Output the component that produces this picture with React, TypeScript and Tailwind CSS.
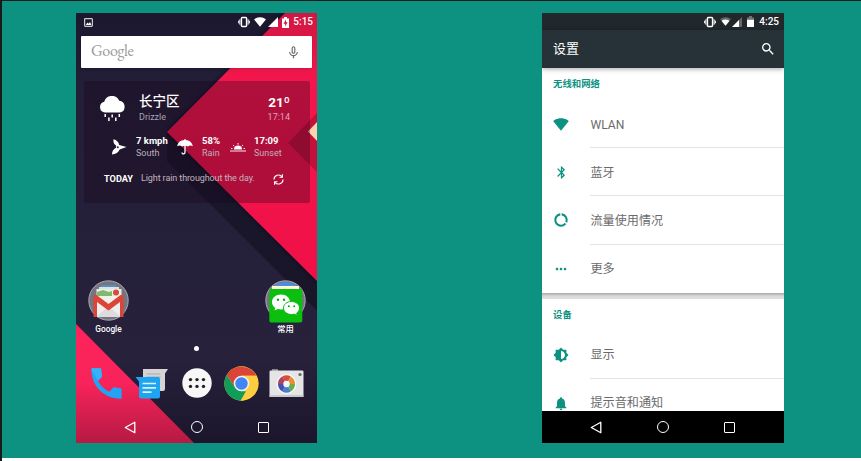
import React from "react";
import {
  MdBluetooth,
  MdBrightness6,
  MdDataUsage,
  MdMicNone,
  MdMoreHoriz,
  MdNotifications,
  MdSearch,
} from "react-icons/md";

const Vibrate = () => (
  <svg className="h-3 w-3" viewBox="0 0 12 12">
    <rect x="3.4" y="1.6" width="5.2" height="8.8" rx="1" fill="none" stroke="#fff" strokeWidth="1.5" />
    <path d="M1.8 3.4v5.2M10.2 3.4v5.2" stroke="#fff" strokeWidth="1" />
    <path d="M.5 4.7v2.6M11.5 4.7v2.6" stroke="#fff" strokeWidth=".9" />
  </svg>
);

const WifiFan = ({ className, dim }: { className: string; dim?: boolean }) => (
  <svg className={className} viewBox="0 0 24 19">
    <path d="M12 19L.2 4.3C.7 3.9 5.1 0 12 0s11.3 3.9 11.8 4.3z" fill="currentColor" opacity={dim ? 0.3 : 1} />
    {dim && <path d="M12 19L3.5 8.4C4.5 7.600 7.500 5.300 12 5.300s7.500 2.300 8.500 3.100z" fill="currentColor" />}
  </svg>
);

const Signal = ({ dim }: { dim?: boolean }) => (
  <svg className="h-[10px] w-[10px]" viewBox="0 0 10 10">
    <path d="M0 10L10 0v10z" fill="#fff" opacity={dim ? 0.3 : 1} />
    {dim && <path d="M0 10L7 3v7z" fill="#fff" />}
  </svg>
);

const Battery = ({ charging }: { charging?: boolean }) => (
  <svg className="h-[11px] w-[7px]" viewBox="0 0 7 11">
    <path d="M0 1.500h2V0h3v1.500h2V11H0z" fill="#fff" opacity={charging ? 1 : 0.35} />
    {charging ? (
      <path d="M4 2.500L1.500 6.700h1.600v2.800l2.500-4.200H4z" fill="#c8183f" />
    ) : (
      <path d="M0 3.800h7V11H0z" fill="#fff" />
    )}
  </svg>
);

const NavBar = ({ className }: { className: string }) => (
  <div className={`flex h-8 shrink-0 items-center ${className}`}>
    <svg className="h-[13px] w-3" viewBox="0 0 12 13">
      <path d="M10.800 1.300v10.400L1.300 6.500z" fill="none" stroke="#fff" strokeWidth="1.300" strokeLinejoin="round" />
    </svg>
    <div className="ml-[55px] h-3 w-3 rounded-full border-[1.5px] border-white" />
    <div className="ml-[55px] h-[11px] w-[11px] rounded-[1px] border-[1.5px] border-white" />
  </div>
);

const Wallpaper = () => (
  <svg className="absolute inset-0 h-full w-full" viewBox="0 0 241 430" preserveAspectRatio="none">
    <defs>
      <linearGradient id="red" x1="0" y1="0" x2="0" y2="1">
        <stop offset="0" stopColor="#d01743" />
        <stop offset=".25" stopColor="#f3164c" />
        <stop offset="1" stopColor="#ef1047" />
      </linearGradient>
      <linearGradient id="corner" x1="0" y1="0" x2="0" y2="1">
        <stop offset="0" stopColor="#ff245b" />
        <stop offset=".5" stopColor="#f7235a" />
        <stop offset="1" stopColor="#b51a43" />
      </linearGradient>
      <linearGradient id="night" x1="0" y1="0" x2="0" y2="1">
        <stop offset="0" stopColor="#1b182e" />
        <stop offset=".18" stopColor="#231f38" />
        <stop offset=".8" stopColor="#27213c" />
        <stop offset="1" stopColor="#1b162c" />
      </linearGradient>
      <filter id="soft" x="-10%" y="-10%" width="120%" height="120%">
        <feGaussianBlur stdDeviation="2.500" />
      </filter>
    </defs>
    <path d="M0 0h241v430H0z" fill="url(#night)" />
    <path d="M91 119v29l150 150v-30z" fill="#19162a" />
    <path d="M208 0L91 119l150 149V0z" fill="#100d20" opacity=".7" filter="url(#soft)" />
    <path d="M209 0L91 119l150 149V0z" fill="url(#red)" />
    <path d="M241 100l-29 30 29 29z" fill="#c40f3b" />
    <path d="M241 109l-9 9.500 9 9.500z" fill="#ffd1ae" />
    <path d="M0 311l118 119H0z" fill="url(#corner)" />
  </svg>
);

const RainCloud = () => (
  <svg className="h-[27px] w-[27px]" viewBox="0 0 27 27">
    <path d="M6 16.500a5.500 5.500 0 01-.8-10.800 8 8 0 0115-1 6 6 0 01.8 11.800z" fill="#fff" />
    <path d="M6.200 18v3M9.900 21.500v3.500M13.200 18.500v3M16.800 21.500v3.500M20.300 18v3" stroke="#fff" strokeWidth="1.500" />
  </svg>
);

const Fan = () => (
  <svg className="h-4 w-4" viewBox="0 0 16 16">
    <path d="M5 6.500C2.800 4.800 2 2.700 2.500.2 5.800 1 7.800 3.200 8.200 6L15.500 8 8.600 10.400C7.500 13.500 4.800 15.200 1 15.500c-.1-3 1.200-5.200 4.200-7z" fill="#fff" />
    <circle cx="6.800" cy="8.300" r="1" fill="#292139" />
  </svg>
);

const Umbrella = () => (
  <svg className="h-4 w-4" viewBox="0 0 16 16">
    <path d="M.2 7.200C.7 3.600 3.700 1.200 7.400 1V0h1.200v1c3.700.2 6.700 2.600 7.200 6.200-1.800-1-3.500-1-4.700.3C9.300 6.600 6.700 6.600 5 7.500 3.700 6.200 2 6.200.2 7.200z" fill="#fff" />
    <path d="M8 6v7.300c0 2.200-3 2.200-3 .2" stroke="#fff" strokeWidth="1.300" fill="none" />
  </svg>
);

const Sunset = () => (
  <svg className="h-[9px] w-4" viewBox="0 0 16 9">
    <path d="M4 6.500a4 4 0 018 0z" fill="#fff" />
    <path d="M0 8h16M8 0v1.700M3 2l1.300 1.200M13 2l-1.300 1.200M1 5.500h1.500M13.500 5.500H15" stroke="#fff" strokeWidth=".9" />
  </svg>
);

const Refresh = () => (
  <svg className="h-[11px] w-[11px]" viewBox="0 0 11 11" fill="none" stroke="#fff" strokeWidth="1.100">
    <path d="M1 5.500A4.500 4.500 0 019 2.700M10 5.500a4.500 4.500 0 01-8 2.800" />
    <path d="M9.400.3v2.900H6.500M1.600 10.700V7.800h2.900" />
  </svg>
);

const GmailFolder = () => (
  <svg className="h-[41px] w-[41px]" viewBox="0 0 41 41">
    <circle cx="20.500" cy="20.500" r="19.700" fill="#777482" stroke="#aaa8b2" strokeWidth="1" />
    <path d="M13 5h15v5H13z" fill="#5c8fbd" />
    <path d="M11 7h20v3H11z" fill="#d5e4e7" />
    <path d="M8.500 9h25v12h-25z" fill="#e9eee0" />
    <path d="M9 12l6-2 6 2 3-1v8H9z" fill="#7fba70" />
    <circle cx="28" cy="12.500" r="3" fill="#d84a40" />
    <path d="M6 17h29v20H6z" fill="#eee" />
    <path d="M8 37l12.500-11L33 37z" fill="#dcdcdc" />
    <path d="M9 16h23L20.500 26z" fill="#f0f2ea" />
    <path d="M5.500 17q0-2.500 3-2L20.500 24l12-9q3-.5 3 2v20H32V22L20.500 30.500 9 22v15H5.500z" fill="#db4437" />
  </svg>
);

const WechatFolder = () => (
  <svg className="h-[43px] w-[41px]" viewBox="0 0 41 43">
    <circle cx="20.500" cy="20.500" r="19.700" fill="#777482" stroke="#aaa8b2" strokeWidth="1" />
    <path d="M10 4.500q10.500-5 21 0v4H10z" fill="#4b8edb" />
    <path d="M7 6h27v3.500H7z" fill="#fffbd2" />
    <rect x="4.300" y="9" width="33" height="33.500" rx="2" fill="#0abf0e" />
    <path d="M16 14.500c-5.200 0-9 3.400-9 7.600 0 2.400 1.200 4.400 3.200 5.800l-.7 2.700 3.200-1.600c1 .3 2.100.5 3.300.5 5.200 0 9-3.200 9-7.400s-3.800-7.600-9-7.600z" fill="#fff" />
    <path d="M26.500 21.500c-4.700 0-8 3-8 6.500s3.300 6.500 8 6.500c1 0 2-.1 2.800-.4l3 1.500-.7-2.500c1.800-1.200 2.900-3 2.900-5.100 0-3.500-3.300-6.500-8-6.500z" fill="#fff" stroke="#0abf0e" strokeWidth="1" />
    <g fill="#0aa80e">
      <circle cx="13" cy="19.800" r="1.200" />
      <circle cx="19" cy="19.800" r="1.200" />
      <circle cx="23.800" cy="26.300" r="1" />
      <circle cx="29.200" cy="26.300" r="1" />
    </g>
  </svg>
);

const Handset = () => (
  <svg className="h-[31px] w-[31px]" viewBox="0 0 31 31">
    <path d="M.3 1.500Q.3.300 1.500.3h7.400q1.100 0 1.300 1.200l.8 6.300q.1.900-.5 1.500L7 12.700c2.500 4.800 6.400 8.600 11.300 11.100l3.600-4q.6-.6 1.500-.5l6.100.9q1.200.2 1.200 1.300v8q0 1.200-1.200 1.200C13 30.700.3 18 .3 1.500z" fill="#22a3f4" />
    <path d="M.300 1.500Q.3.300 1.500.3h7.400q1.100 0 1.300 1.200l.8 6.300q.1.900-.5 1.500L7 12.700C4.500 9 2.500 5.500.300 1.500z" fill="#35b2fa" />
  </svg>
);

const Messages = () => (
  <svg className="h-[31px] w-[34px]" viewBox="0 0 34 31">
    <path d="M8 1h25l-3 4.500V21q0 2-2 2H8z" fill="#d5d3d4" />
    <path d="M11.500 6h14M11.500 9h14" stroke="#aaa9ad" strokeWidth="1.100" />
    <path d="M.5 9H23q2 0 2 2v17.500q0 2-2 2H6q-2 0-2-2V13.500z" fill="#1ea5f2" />
    <path d="M7.500 15.500h13.500M7.500 19.800h13.500M7.500 24.100h9" stroke="#d8f2ff" strokeWidth="1.700" />
  </svg>
);

const AppDrawer = () => (
  <svg className="h-[30px] w-[30px]" viewBox="0 0 30 30">
    <circle cx="15" cy="15" r="14.700" fill="#f7f7f8" />
    {[8.5, 15, 21.5].map((x) => (
      <g key={x} fill="#222">
        <circle cx={x} cy="11.600" r="1.700" />
        <circle cx={x} cy="18.400" r="1.700" />
      </g>
    ))}
  </svg>
);

const Chrome = () => (
  <svg className="h-[35px] w-[35px]" viewBox="0 0 48 48">
    <circle cx="24" cy="24" r="23.500" fill="#ffcd40" />
    <path d="M3.600 12.300A23.500 23.500 0 0144.400 13.500H24L14.900 29.300z" fill="#db4437" />
    <path d="M3.600 12.300L14.900 29.300 24 34.500h9.100L22.800 47.500A23.500 23.500 0 013.600 12.300z" fill="#0f9d58" />
    <path d="M33.100 29.300L22.800 47.500A23.500 23.500 0 0044.400 13.500H24z" fill="#ffcd40" />
    <circle cx="24" cy="24" r="10.700" fill="#f1f1f1" />
    <circle cx="24" cy="24" r="8.500" fill="#4285f4" />
  </svg>
);

const Camera = () => (
  <svg className="h-[30px] w-[35px]" viewBox="0 0 35 30">
    <path d="M3 1h6v4H3z" fill="#85838a" />
    <rect x=".5" y="2.500" width="34" height="26.500" rx="1.300" fill="#e5e5e5" />
    <path d="M.5 27h34v2H.5z" fill="#cacaca" />
    <circle cx="31" cy="6.500" r="1.600" fill="#656565" />
    <circle cx="17.500" cy="16" r="10" fill="#fafafa" />
    <g transform="translate(17.500 16)">
      <path d="M0 0L-4.300-7.400A8.500 8.500 0 014.300-7.400z" fill="#dc4b3e" />
      <path d="M0 0L4.300-7.400A8.500 8.500 0 018.500 0z" fill="#e88d38" />
      <path d="M0 0h8.500a8.500 8.500 0 01-4.200 7.400z" fill="#66ae4b" />
      <path d="M0 0l4.300 7.400a8.500 8.500 0 01-8.600 0z" fill="#477ed0" />
      <path d="M0 0l-4.300 7.400A8.500 8.500 0 01-8.500 0z" fill="#484dae" />
      <path d="M0 0h-8.500a8.500 8.500 0 014.200-7.400z" fill="#a84563" />
      <circle r="3.200" fill="#f7f7f7" />
    </g>
  </svg>
);

const Stat = ({ value, label, className }: { value: string; label: string; className: string }) => (
  <div className={`whitespace-nowrap leading-3 ${className}`}>
    <div className="text-[9.5px] font-bold text-white">{value}</div>
    <div className="text-[9px] text-[#bfb0bd]">{label}</div>
  </div>
);

const WeatherCard = () => (
  <section className="ml-2 mt-[13px] h-[122px] w-[226px] shrink-0 rounded-[2px] bg-[#170318]/30 text-white">
    <div className="flex h-[53px] pt-[12px]">
      <div className="ml-[15px] w-10 pt-[3px]">
        <RainCloud />
      </div>
      <div className="w-[60px]">
        <div className="h-[18px] text-[13.5px] font-medium leading-[17px]">长宁区</div>
        <div className="text-[9px] leading-3 text-[#aaa3b4]">Drizzle</div>
      </div>
      <div className="ml-auto mr-5 text-right">
        <div className="h-[18px] text-[13.5px] font-bold leading-[18px]">21º</div>
        <div className="text-[9px] leading-3 text-[#e0a3b3]">17:14</div>
      </div>
    </div>
    <div className="flex h-[26px] items-center">
      <div className="ml-[27px]"><Fan /></div>
      <Stat value="7 kmph" label="South" className="ml-[9px] w-10" />
      <div className="ml-[1px]"><Umbrella /></div>
      <Stat value="58%" label="Rain" className="ml-[9px] w-7" />
      <Sunset />
      <Stat value="17:09" label="Sunset" className="ml-[8px]" />
    </div>
    <div className="mt-[12px] flex h-[14px] items-center whitespace-nowrap">
      <span className="ml-5 w-[37px] text-[9.2px] font-bold">TODAY</span>
      <span className="w-[132px] text-[9px] tracking-[-.1px] text-[#c5b3bf]">Light rain throughout the day.</span>
      <Refresh />
    </div>
  </section>
);

const HomePhone = () => (
  <div className="relative h-[430px] w-[241px] overflow-hidden">
    <Wallpaper />
    <div className="relative flex h-full flex-col text-white">
      <div className="flex h-[18px] shrink-0 items-center pl-2 pr-1">
        <svg className="h-[9px] w-[9px]" viewBox="0 0 9 9">
          <rect x=".6" y=".6" width="7.800" height="7.800" rx=".8" fill="none" stroke="#ccc9d2" strokeWidth="1.200" />
          <path d="M1.700 7l1.800-2.500 1.200 1.300L6 4l1.500 3z" fill="#fff" />
        </svg>
        <div className="ml-auto flex items-center">
          <Vibrate />
          <WifiFan className="ml-1 h-[10px] w-3" />
          <span className="ml-[2px]"><Signal /></span>
          <span className="ml-1"><Battery charging /></span>
          <span className="ml-1 text-[10px] font-medium leading-none">5:15</span>
        </div>
      </div>
      <div className="ml-[5px] mt-[5px] flex h-8 w-[231px] shrink-0 items-center rounded-[1px] bg-white shadow-sm">
        <span className="ml-[10px] pb-[2px] font-['EB_Garamond','Liberation_Serif',serif] text-[16px] leading-none tracking-[-.35px] text-[#999]">Google</span>
        <MdMicNone className="ml-auto mr-[11px] h-[15px] w-[15px] text-[#666]" />
      </div>
      <WeatherCard />
      <div className="mt-[77px] flex h-[57px] shrink-0 justify-between pl-3 pr-[11px] text-[8.3px] font-medium">
        <div className="flex w-[41px] flex-col items-center">
          <div className="h-[42px]"><GmailFolder /></div>
          <span className="leading-[15px]">Google</span>
        </div>
        <div className="flex w-[41px] flex-col items-center">
          <div className="h-[42px]"><WechatFolder /></div>
          <span className="leading-[15px]">常用</span>
        </div>
      </div>
      <div className="mx-auto mt-[9px] h-[5px] w-[5px] shrink-0 rounded-full bg-white" />
      <div className="mt-[14px] flex h-9 shrink-0 items-center">
        <span className="ml-[15px]"><Handset /></span>
        <span className="ml-[13px]"><Messages /></span>
        <span className="ml-[13px]"><AppDrawer /></span>
        <span className="ml-[12px]"><Chrome /></span>
        <span className="ml-[10px]"><Camera /></span>
      </div>
      <NavBar className="mt-auto pl-[48px]" />
    </div>
  </div>
);

const SettingsRow = ({ icon, label, divider }: { icon: React.ReactNode; label: string; divider?: boolean }) => (
  <div className="flex h-[48.2px] shrink-0 pl-[11px]">
    <div className="flex w-[37px] items-center text-[#0d9282]">
      <span className="flex w-4 justify-center">{icon}</span>
    </div>
    <div className={`flex flex-1 items-center border-b pl-[.5px] pt-[2px] text-[12.1px] text-[#6b6b6b] ${divider ? "border-[#e3e3e3]" : "border-transparent"}`}>
      {label}
    </div>
  </div>
);

const SettingsPhone = () => (
  <div className="flex h-[430px] w-[242px] flex-col overflow-hidden bg-white">
    <div className="flex h-[17px] shrink-0 items-center justify-end bg-[#21282c] pr-[5px] text-white">
      <Vibrate />
      <WifiFan dim className="ml-[4px] h-[9px] w-[11px]" />
      <span className="ml-[1px]"><Signal dim /></span>
      <span className="ml-[5px]"><Battery /></span>
      <span className="ml-[5px] text-[10px] font-medium leading-none">4:25</span>
    </div>
    <header className="z-10 flex h-[38px] shrink-0 items-center bg-[#273238] pl-[11px] pr-2 text-white shadow-[0_1px_5px_rgba(0,0,0,.35)]">
      <h1 className="text-[13px]">设置</h1>
      <MdSearch className="ml-auto h-4 w-4" />
    </header>
    <main className="flex h-[343px] shrink-0 flex-col overflow-hidden">
      <h2 className="h-8 shrink-0 pl-[11px] text-[9.4px] font-bold leading-8 text-[#0d9282]">无线和网络</h2>
      <SettingsRow icon={<WifiFan className="h-[13px] w-4" />} label="WLAN" divider />
      <SettingsRow icon={<MdBluetooth size={15} />} label="蓝牙" divider />
      <SettingsRow icon={<MdDataUsage size={16} />} label="流量使用情况" divider />
      <SettingsRow icon={<MdMoreHoriz size={16} />} label="更多" />
      <div className="h-[6px] shrink-0 bg-[linear-gradient(to_bottom,#a8a8a8,#d9d9d9_50%,#e0e0e0)]" />
      <h2 className="h-8 shrink-0 pl-[11px] text-[9.4px] font-bold leading-8 text-[#0d9282]">设备</h2>
      <SettingsRow icon={<MdBrightness6 size={16} />} label="显示" divider />
      <SettingsRow icon={<MdNotifications size={17} />} label="提示音和通知" />
    </main>
    <NavBar className="bg-black pl-[48px]" />
  </div>
);

export default function App() {
  return (
    <div className="flex h-[461px] w-[861px] flex-col overflow-hidden bg-white font-[Roboto,'Noto_Sans_CJK_SC',sans-serif]">
      <div className="flex h-[458px] shrink-0 items-start border-l-2 border-t border-[#171b1b] bg-[#0d9282] pl-[74px] pt-3">
        <HomePhone />
        <div className="ml-[225px]">
          <SettingsPhone />
        </div>
      </div>
      <div className="h-[3px] shrink-0 border-l-2 border-[#171b1b] bg-white" />
    </div>
  );
}
